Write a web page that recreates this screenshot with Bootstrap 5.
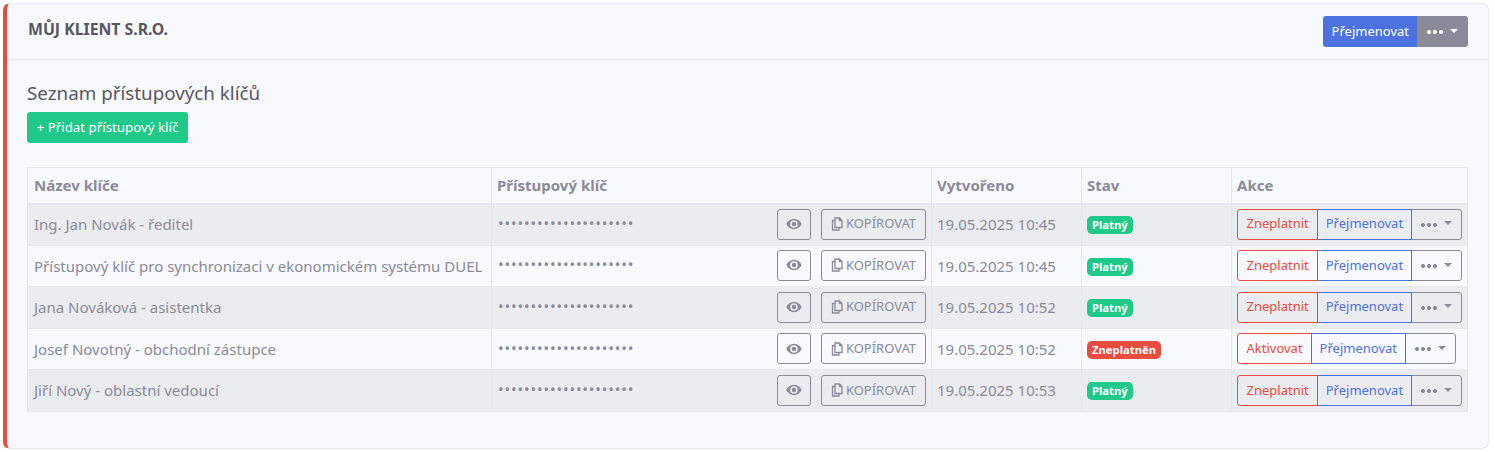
<!doctype html>
<html lang="cs"><head><meta charset="utf-8"><title>Přístupové klíče</title>
<link href="https://cdn.jsdelivr.net/npm/bootstrap@5.3.0/dist/css/bootstrap.min.css" rel="stylesheet">
<style>
html,body{background:#fff;font-family:"Noto Sans",sans-serif;font-size:15px;color:#8a8a99}
.page-wrap{padding:3px 6px 0 3px}
.client-card{height:446px;background:#f8f9fd;border:1px solid #e6e7ef;border-left:4px solid #e94b3c;border-radius:7px;overflow:hidden}
.client-head{height:56px;padding:12px 20px 0 21px;border-bottom:1px solid #e6e7ef}
.client-title{font-size:15.8px;font-weight:700;color:#575763;margin:3px 0 0;line-height:20px}
.client-body{padding:21px 20px 0 20px}
.section-title{font-size:18.8px;font-weight:400;color:#575763;line-height:24px;margin:0 0 7px}
.btn-add{background:#1fc98a;border:0;color:#fff;font-size:13.3px;height:31px;width:161px;padding:0;border-radius:3px;margin-bottom:24px;line-height:31px}
.btn-blue{background:#4c72e0;color:#fff;border:0;font-size:13px;height:31px;padding:0 8px 0 9px;border-radius:3px 0 0 3px}
.btn-grey{background:#8a8a99;color:#fff;border:0;font-size:13px;height:31px;width:51px;padding:0;border-radius:0 3px 3px 0}
.dots{display:inline-block;width:16px;height:4px;vertical-align:middle;background:radial-gradient(circle at 2px 2px,currentColor 1.9px,transparent 2.2px) 0 0/6px 4px repeat-x}
.caret{display:inline-block;margin-left:7px;border-top:4px solid currentColor;border-left:4.5px solid transparent;border-right:4.5px solid transparent;vertical-align:3px}
.keys-table{table-layout:fixed;width:1440px;margin:0;border-collapse:collapse;font-size:15px;color:#8a8a99;--bs-table-bg:transparent;--bs-table-color:#8a8a99}
.keys-table th,.keys-table td{border:1px solid #e6e7ef;padding:0 5px;vertical-align:middle;white-space:nowrap;color:#8a8a99}
.keys-table th:first-child,.keys-table td:first-child{padding-left:6px}
.keys-table th{height:36px;font-weight:700;font-size:15px;border-bottom-width:2px}
.keys-table td{height:41.6px}
.keys-table tbody tr:nth-child(odd) td{background:#ebecf0}
.key-cell{display:flex;align-items:center;justify-content:space-between;margin-top:-.8px}
.key-dots{font-size:15px;letter-spacing:.85px;line-height:1;margin-top:-1px;margin-left:1px}
.tool-btns{display:flex;gap:10px}
.tool-btn{background:transparent;border:1px solid #8a8a99;border-radius:3px;color:#8a8a99;height:31px;padding:0;font-size:13px;display:flex;align-items:center;justify-content:center}
.tool-eye{width:34px}.tool-copy{width:105px;gap:3px}
.state{display:inline-block;color:#fff;font-weight:700;font-size:11.25px;line-height:18px;height:18px;padding:0 5px;border-radius:5px;vertical-align:1px}
.state-ok{background:#1fc98a}.state-bad{background:#e94b3c}
.act-grp{display:flex;width:max-content;height:31px;margin:-.8px 0 0 0}
.act-grp button{background:transparent;height:31px;font-size:13px;padding:0 7.5px;border:1px solid;margin-left:-1px}
.act-red{border-color:#e94b3c!important;color:#e94b3c;border-radius:3px 0 0 3px;margin-left:0!important;padding:0 8.5px!important}
.act-blue{border-color:#4c72e0!important;color:#4c72e0;border-radius:0;position:relative}
.act-grey{border-color:#8a8a99!important;color:#8a8a99;border-radius:0 3px 3px 0;width:51px;padding:0!important}
</style></head><body>
<div class="page-wrap">
<div class="client-card">
 <div class="client-head d-flex justify-content-between align-items-start">
  <h1 class="client-title">MŮJ KLIENT S.R.O.</h1>
  <div class="d-flex"><button class="btn-blue">Přejmenovat</button><button class="btn-grey"><span class="dots"></span><span class="caret"></span></button></div>
 </div>
 <div class="client-body">
  <h2 class="section-title">Seznam přístupových klíčů</h2>
  <button class="btn-add d-block">+ Přidat přístupový klíč</button>
  <table class="table keys-table">
   <colgroup><col style="width:464px"><col style="width:440px"><col style="width:150px"><col style="width:150px"><col style="width:236px"></colgroup>
   <thead><tr><th>Název klíče</th><th>Přístupový klíč</th><th>Vytvořeno</th><th>Stav</th><th>Akce</th></tr></thead>
   <tbody id="rows"></tbody>
  </table>
 </div>
</div>
</div>
<template id="row"><tr>
 <td class="k-name"></td>
 <td><div class="key-cell"><span class="key-dots">•••••••••••••••••••••</span><div class="tool-btns">
  <button class="tool-btn tool-eye" aria-label="Zobrazit"><svg width="16" height="12" viewBox="0 0 16 12"><path fill="currentColor" fill-rule="evenodd" d="M8 .8C4.6.8 1.7 3 .3 6c1.4 3 4.3 5.2 7.7 5.2s6.300-2.200 7.700-5.200C14.300 3 11.400.8 8 .8zM8 9.800A3.800 3.800 0 1 1 8 2.200a3.800 3.800 0 0 1 0 7.600zM8 3.800a2.200 2.200 0 1 0 0 4.400 2.200 2.200 0 0 0 0-4.400z"/></svg></button>
  <button class="tool-btn tool-copy"><svg width="12" height="14" viewBox="0 0 12 14"><path fill="none" stroke="currentColor" stroke-width="1.300" d="M4 1h4.500L11 3.500V10.500H4zM8.500 1v2.500H11M4 3.500H1.500V13H8v-2.500"/></svg>KOPÍROVAT</button>
 </div></div></td>
 <td class="k-date"></td>
 <td><span class="state"></span></td>
 <td><div class="act-grp"><button class="act-red"></button><button class="act-blue">Přejmenovat</button><button class="act-grey"><span class="dots"></span><span class="caret"></span></button></div></td>
</tr></template>
<script>
[["Ing. Jan Novák - ředitel","19.05.2025 10:45",1],
["Přístupový klíč pro synchronizaci v ekonomickém systému DUEL","19.05.2025 10:45",1],
["Jana Nováková - asistentka","19.05.2025 10:52",1],
["Josef Novotný - obchodní zástupce","19.05.2025 10:52",0],
["Jiří Nový - oblastní vedoucí","19.05.2025 10:53",1]].forEach(function(r){
 var n=document.getElementById('row').content.cloneNode(true);
 n.querySelector('.k-name').textContent=r[0];
 n.querySelector('.k-date').textContent=r[1];
 var s=n.querySelector('.state');s.textContent=r[2]?'Platný':'Zneplatněn';s.classList.add(r[2]?'state-ok':'state-bad');
 n.querySelector('.act-red').textContent=r[2]?'Zneplatnit':'Aktivovat';
 document.getElementById('rows').appendChild(n);
});
</script>
<script src="https://cdn.jsdelivr.net/npm/bootstrap@5.3.0/dist/js/bootstrap.bundle.min.js"></script>
</body></html>
